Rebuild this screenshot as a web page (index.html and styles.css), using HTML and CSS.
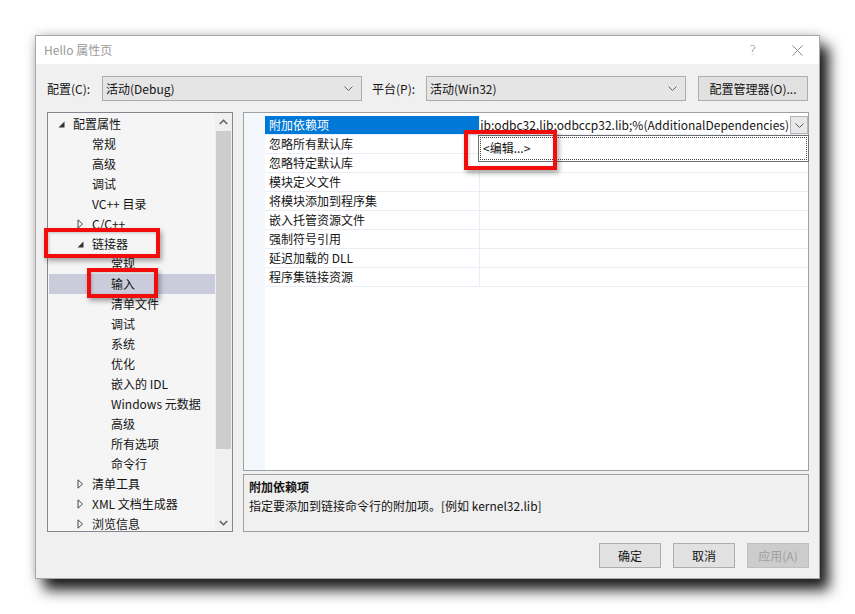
FILE: index.html
```html
<!DOCTYPE html>
<html lang="zh-CN">
<head>
<meta charset="utf-8">
<title>Hello 属性页</title>
<link rel="stylesheet" href="styles.css">
</head>
<body>
<div class="window">
  <div class="titlebar">
    <span class="title">Hello 属性页</span>
    <span class="help">?</span>
    <span class="close"><svg width="11" height="11" viewBox="0 0 11 11"><path d="M0.5 0.5L10.5 10.5M10.5 0.5L0.5 10.5" stroke="#8a8a8a" stroke-width="1" fill="none"/></svg></span>
  </div>
  <div class="content">
    <div class="toolbar">
      <span class="lbl lbl1">配置(C):</span>
      <div class="select"><span class="seltext">活动(Debug)</span><svg class="chev" width="9" height="5" viewBox="0 0 9 5"><path d="M0.5 0.5L4.5 4.5L8.5 0.5" stroke="#666" fill="none"/></svg></div>
      <span class="lbl lbl2">平台(P):</span>
      <div class="select"><span class="seltext">活动(Win32)</span><svg class="chev" width="9" height="5" viewBox="0 0 9 5"><path d="M0.5 0.5L4.5 4.5L8.5 0.5" stroke="#666" fill="none"/></svg></div>
      <button class="btn mgr">配置管理器(O)...</button>
    </div>
    <div class="main">
      <div class="tree">
        <div class="tree-list">
          <div class="trow l0"><span class="tw"><svg width="7" height="7" viewBox="0 0 7 7"><path d="M6.5 0.5V6.5H0.5Z" fill="#333"/></svg></span><span>配置属性</span></div>
          <div class="trow l1"><span class="tw"></span><span>常规</span></div>
          <div class="trow l1"><span class="tw"></span><span>高级</span></div>
          <div class="trow l1"><span class="tw"></span><span>调试</span></div>
          <div class="trow l1"><span class="tw"></span><span>VC++ 目录</span></div>
          <div class="trow l0x"><span class="tw"><svg width="7" height="10" viewBox="0 0 7 10"><path d="M1 0.8L5.5 5L1 9.2Z" stroke="#444" fill="none"/></svg></span><span>C/C++</span></div>
          <div class="trow l0x"><span class="tw"><svg width="7" height="7" viewBox="0 0 7 7"><path d="M6.5 0.5V6.5H0.5Z" fill="#333"/></svg></span><span>链接器</span></div>
          <div class="trow l2"><span class="tw"></span><span>常规</span></div>
          <div class="trow l2 sel"><span class="tw"></span><span>输入</span></div>
          <div class="trow l2"><span class="tw"></span><span>清单文件</span></div>
          <div class="trow l2"><span class="tw"></span><span>调试</span></div>
          <div class="trow l2"><span class="tw"></span><span>系统</span></div>
          <div class="trow l2"><span class="tw"></span><span>优化</span></div>
          <div class="trow l2"><span class="tw"></span><span>嵌入的 IDL</span></div>
          <div class="trow l2"><span class="tw"></span><span>Windows 元数据</span></div>
          <div class="trow l2"><span class="tw"></span><span>高级</span></div>
          <div class="trow l2"><span class="tw"></span><span>所有选项</span></div>
          <div class="trow l2"><span class="tw"></span><span>命令行</span></div>
          <div class="trow l0x"><span class="tw"><svg width="7" height="10" viewBox="0 0 7 10"><path d="M1 0.8L5.5 5L1 9.2Z" stroke="#444" fill="none"/></svg></span><span>清单工具</span></div>
          <div class="trow l0x"><span class="tw"><svg width="7" height="10" viewBox="0 0 7 10"><path d="M1 0.8L5.5 5L1 9.2Z" stroke="#444" fill="none"/></svg></span><span>XML 文档生成器</span></div>
          <div class="trow l0x"><span class="tw"><svg width="7" height="10" viewBox="0 0 7 10"><path d="M1 0.8L5.5 5L1 9.2Z" stroke="#444" fill="none"/></svg></span><span>浏览信息</span></div>
        </div>
        <div class="vscroll">
          <div class="sbtn"><svg width="9" height="6" viewBox="0 0 9 6"><path d="M0.8 5L4.5 1.3L8.2 5" stroke="#606060" stroke-width="1.6" fill="none"/></svg></div>
          <div class="strack"><div class="thumb"></div></div>
          <div class="sbtn"><svg width="9" height="6" viewBox="0 0 9 6"><path d="M0.8 1L4.5 4.7L8.2 1" stroke="#606060" stroke-width="1.6" fill="none"/></svg></div>
        </div>
      </div>
      <div class="right">
        <div class="grid">
          <div class="gutter"></div>
          <div class="rows">
            <div class="prow"><div class="pname psel">附加依赖项</div><div class="pval"><span class="vtext"><span>2.lib;odbc32.lib;odbccp32.lib;%(AdditionalDependencies)</span></span><span class="ddbtn"><svg width="9" height="5" viewBox="0 0 9 5"><path d="M0.5 0.5L4.5 4.5L8.5 0.5" stroke="#555" fill="none"/></svg></span></div></div>
            <div class="prow"><div class="pname">忽略所有默认库</div><div class="pval"></div></div>
            <div class="prow"><div class="pname">忽略特定默认库</div><div class="pval"></div></div>
            <div class="prow"><div class="pname">模块定义文件</div><div class="pval"></div></div>
            <div class="prow"><div class="pname">将模块添加到程序集</div><div class="pval"></div></div>
            <div class="prow"><div class="pname">嵌入托管资源文件</div><div class="pval"></div></div>
            <div class="prow"><div class="pname">强制符号引用</div><div class="pval"></div></div>
            <div class="prow"><div class="pname">延迟加载的 DLL</div><div class="pval"></div></div>
            <div class="prow"><div class="pname">程序集链接资源</div><div class="pval"></div></div>
          </div>
          <div class="droplist"><div class="dropitem">&lt;编辑...&gt;</div></div>
        </div>
        <div class="desc">
          <div class="dtitle">附加依赖项</div>
          <div class="dtext">指定要添加到链接命令行的附加项。[例如 kernel32.lib]</div>
        </div>
      </div>
    </div>
    <div class="footer">
      <button class="btn fbtn">确定</button>
      <button class="btn fbtn">取消</button>
      <button class="btn fbtn disabled">应用(A)</button>
    </div>
  </div>
  <div class="mark mark-linker"></div>
  <div class="mark mark-input"></div>
  <div class="mark mark-edit"></div>
</div>
</body>
</html>
```
FILE: styles.css
```css
* { box-sizing: border-box; }
html, body { margin: 0; padding: 0; background: #ffffff; }
body {
  font-family: "Noto Sans CJK SC", "Noto Sans", sans-serif;
  font-size: 12px;
  color: #141414;
  width: 855px;
  height: 614px;
  overflow: hidden;
  padding-top: 35px;
  padding-left: 35px;
}
.window {
  position: relative;
  width: 785px;
  height: 544px;
  border: 1px solid #a8a8a8;
  background: #f0f0f0;
  display: flex;
  flex-direction: column;
  box-shadow: 0 0 10px rgba(0,0,0,0.22), 9px 11px 13px rgba(0,0,0,0.88);
}
.titlebar {
  height: 28px;
  flex: none;
  background: #ffffff;
  display: flex;
  align-items: center;
  padding-left: 8px;
}
.title { flex: 1; color: #9a9a9a; line-height: 28px; }
.help { color: #8a8a8a; font-size: 14px; width: 9px; margin-right: 34px; line-height: 28px; font-family: "DejaVu Sans", sans-serif; font-weight: 200; }
.close { width: 11px; height: 11px; margin-right: 16px; display: flex; }
.content {
  flex: 1;
  min-width: 0;
  display: flex;
  flex-direction: column;
  padding: 12px 10px 10px 11px;
}
.toolbar { display: flex; align-items: center; height: 25px; }
.lbl { line-height: 25px; flex: none; }
.lbl1 { width: 55px; }
.lbl2 { width: 54px; margin-left: 10px; }
.select {
  flex: none;
  width: 260px;
  height: 25px;
  border: 1px solid #acacac;
  background: #e5e5e5;
  display: flex;
  align-items: center;
  padding: 0 8px 0 3px;
}
.seltext { flex: 1; }
.chev { display: block; }
.btn {
  font-family: "Noto Sans CJK SC", "Noto Sans", sans-serif;
  font-size: 12px;
  color: #141414;
  background: #e1e1e1;
  border: 1px solid #adadad;
  height: 25px;
  padding: 0;
  line-height: 23px;
}
.mgr { width: 110px; margin-left: 12px; flex: none; }
.main { display: flex; height: 420px; margin-top: 11px; gap: 10px; min-width: 0; }
.tree {
  flex: none;
  width: 186px;
  border: 1px solid #828790;
  background: #f5f5f5;
  display: flex;
}
.tree-list { flex: 1; min-width: 0; overflow: hidden; padding-top: 1px; }
.trow { height: 20px; line-height: 20px; display: flex; align-items: center; white-space: nowrap; margin-left: 1px; }
.tw { width: 15px; flex: none; display: flex; align-items: center; }
.tw svg { display: block; }
.l0 { padding-left: 9px; }
.l0x { padding-left: 28px; }
.l1 { padding-left: 28px; }
.l2 { padding-left: 47px; }
.trow.sel { background: #cbccdb; }
.vscroll { width: 17px; flex: none; background: #f0f0f0; display: flex; flex-direction: column; }
.sbtn { height: 17px; display: flex; align-items: center; justify-content: center; }
.strack { flex: 1; padding: 1px 1px 65px 1px; display: flex; }
.thumb { flex: 1; background: #cdcdcd; }
.right { flex: 1; min-width: 0; display: flex; flex-direction: column; }
.grid {
  position: relative;
  height: 359px;
  border: 1px solid #a0a0a0;
  background: #ffffff;
  display: flex;
  min-width: 0;
}
.gutter { width: 21px; flex: none; background: #f4f7fc; }
.rows { flex: 1; min-width: 0; padding-top: 3px; }
.prow { display: flex; height: 19px; border-bottom: 1px solid #e9eef6; min-width: 0; }
.pname {
  flex: none;
  width: 215px;
  padding-left: 4px;
  line-height: 18px;
  border-right: 1px solid #e9eef6;
  white-space: nowrap;
}
.pname.psel { background: #0078d7; color: #ffffff; }
.pval { flex: 1; display: flex; min-width: 0; overflow: hidden; }
.vtext { flex: 1; display: flex; justify-content: flex-end; overflow: hidden; white-space: nowrap; line-height: 18px; padding-right: 1px; min-width: 0; }
.vtext span { flex: none; }
.ddbtn { flex: none; width: 18px; height: 18px; border: 1px solid #b4b4b4; background: #e8e8e8; display: flex; align-items: center; justify-content: center; }
.droplist {
  position: absolute;
  left: 234px;
  top: 22px;
  width: 331px;
  height: 27px;
  border: 1px solid #6e6e6e;
  background: #ffffff;
  padding: 1px;
}
.dropitem { height: 100%; border: 1px dotted #444; padding-left: 2px; line-height: 20px; }
.desc {
  margin-top: 3px;
  height: 58px;
  border: 1px solid #a0a0a0;
  padding: 2px 5px;
  line-height: 19px;
}
.dtitle { font-weight: bold; }
.footer { display: flex; justify-content: flex-end; gap: 12px; margin-top: 11px; }
.fbtn { width: 62px; }
.fbtn.disabled { background: #cccccc; border-color: #bfbfbf; color: #a0a0a0; }
.mark {
  position: absolute;
  border: 4px solid #f20d0d;
  box-shadow: 2px 3px 5px rgba(0,0,0,0.35), inset 1px 1px 3px rgba(0,0,0,0.2);
}
.mark-linker { left: 8px; top: 192px; width: 116px; height: 30px; }
.mark-input { left: 51px; top: 232px; width: 71px; height: 30px; }
.mark-edit { left: 428px; top: 94px; width: 93px; height: 40px; }
```
